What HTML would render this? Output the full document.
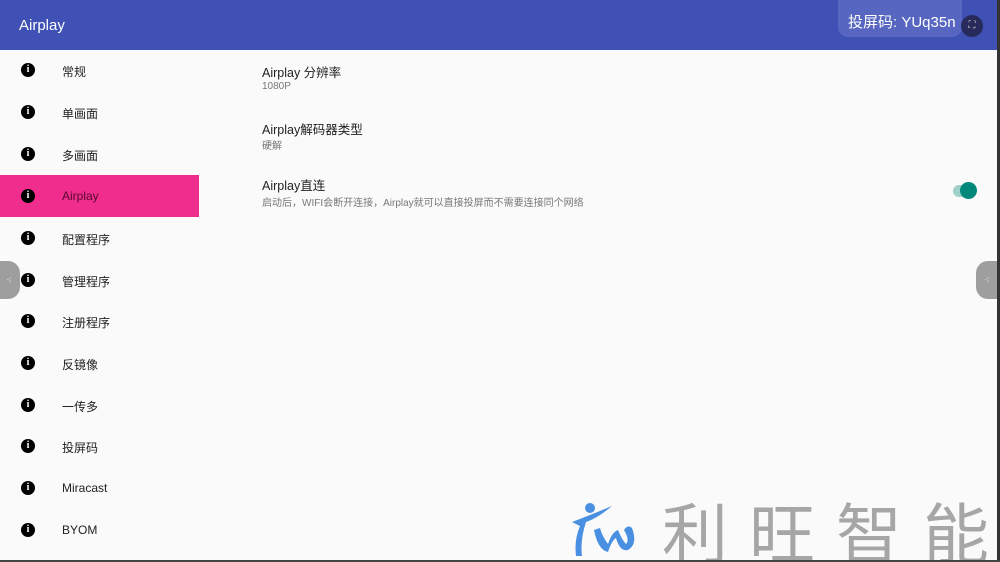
<!DOCTYPE html>
<html style="overflow:hidden"><head><meta charset="utf-8"><style>
*{margin:0;padding:0;box-sizing:border-box}
html,body{width:1000px;height:562px;overflow:hidden}
body{background:#fafafa;font-family:"Liberation Sans","Noto Sans CJK SC",sans-serif;position:relative}
#w{position:absolute;left:0;top:0;width:1000px;height:562px;overflow:hidden}
.bar{position:absolute;left:0;top:0;width:1000px;height:50px;background:#3f51b5}
.bar .t{position:absolute;left:19px;top:17px;color:#fff;font-size:15px}
.code{position:absolute;left:838px;top:0;width:124px;height:37px;background:#5766c0;border-radius:0 0 10px 10px;color:#fff;font-size:15px;padding:11px 0 0 10px;white-space:nowrap;overflow:hidden}
.x{position:absolute;left:961px;top:15px;width:22px;height:22px;border-radius:50%;background:#272a5a;color:#ccc;font-size:10px;text-align:center;line-height:22px}
.item{position:absolute;left:0;width:199px;height:42px}
.item.sel{background:#f02d8c}
.ic{position:absolute;left:21px;top:14px;width:14px;height:14px;border-radius:50%;background:#000;color:#fff;font-size:10px;font-weight:bold;text-align:center;line-height:14px;font-family:"Liberation Serif",serif}
.lb{position:absolute;left:62px;top:14px;font-size:12px;color:#222}
.sel .lb{color:#5a0a30}
.pt{position:absolute;left:262px;font-size:12.5px;color:#222}
.ps{position:absolute;left:262px;font-size:10px;color:#777}
.tr{position:absolute;left:953px;top:185px;width:22px;height:12px;border-radius:6px;background:#9ecfc9}
.th{position:absolute;left:960px;top:182px;width:17px;height:17px;border-radius:50%;background:#00897b}
.side{position:absolute;width:22px;height:38px;background:#9e9e9e;top:261px;color:#fff;font-size:9px;line-height:38px;text-align:center}
.logo{position:absolute;left:662px;top:490px;font-size:66px;color:#a6a6a6;letter-spacing:21px;font-family:"Noto Sans CJK SC",sans-serif;line-height:80px;white-space:nowrap}
</style></head><body><div id="w">
<div class="bar"><div class="t">Airplay</div></div>
<div class="code">投屏码: YUq35n</div>
<div class="x">⛶</div>

<div class="item" style="top:49px"><div class="ic">i</div><div class="lb">常规</div></div>
<div class="item" style="top:91px"><div class="ic">i</div><div class="lb">单画面</div></div>
<div class="item" style="top:133px"><div class="ic">i</div><div class="lb">多画面</div></div>
<div class="item sel" style="top:175px"><div class="ic">i</div><div class="lb">Airplay</div></div>
<div class="item" style="top:217px"><div class="ic">i</div><div class="lb">配置程序</div></div>
<div class="item" style="top:259px"><div class="ic">i</div><div class="lb">管理程序</div></div>
<div class="item" style="top:300px"><div class="ic">i</div><div class="lb">注册程序</div></div>
<div class="item" style="top:342px"><div class="ic">i</div><div class="lb">反镜像</div></div>
<div class="item" style="top:384px"><div class="ic">i</div><div class="lb">一传多</div></div>
<div class="item" style="top:425px"><div class="ic">i</div><div class="lb">投屏码</div></div>
<div class="item" style="top:467px"><div class="ic">i</div><div class="lb">Miracast</div></div>
<div class="item" style="top:509px"><div class="ic">i</div><div class="lb">BYOM</div></div>

<div class="pt" style="top:62px">Airplay 分辨率</div>
<div class="ps" style="top:81px">1080P</div>
<div class="pt" style="top:119px">Airplay解码器类型</div>
<div class="ps" style="top:137px">硬解</div>
<div class="pt" style="top:175px">Airplay直连</div>
<div class="ps" style="top:194px">启动后，WIFI会断开连接，Airplay就可以直接投屏而不需要连接同个网络</div>
<div class="tr"></div><div class="th"></div>

<div class="side" style="left:-2px;border-radius:0 12px 12px 0">⁖</div>
<div class="side" style="left:976px;border-radius:12px 0 0 12px">⁖</div>

<svg style="position:absolute;left:568px;top:500px" width="72" height="60" viewBox="0 0 72 60">
<circle cx="22" cy="8" r="5" fill="#4a90e2"/>
<path d="M4 22 Q20 16 44 6 Q30 18 18 22 Q12 40 14 56 L8 56 Q6 40 12 26 Z" fill="#4a90e2"/>
<path d="M26 30 Q30 50 40 52 Q44 40 48 38 Q52 52 60 50 Q70 44 64 28 Q60 24 56 30 Q62 40 58 44 Q54 40 50 30 Q44 32 40 44 Q34 36 32 28 Z" fill="#4a90e2"/>
</svg>
<div class="logo">利旺智能</div>
<div style="position:absolute;left:997px;top:0;width:3px;height:562px;background:#333"></div>
<div style="position:absolute;left:0;top:560px;width:1000px;height:2px;background:#444"></div>
</div></body></html>
